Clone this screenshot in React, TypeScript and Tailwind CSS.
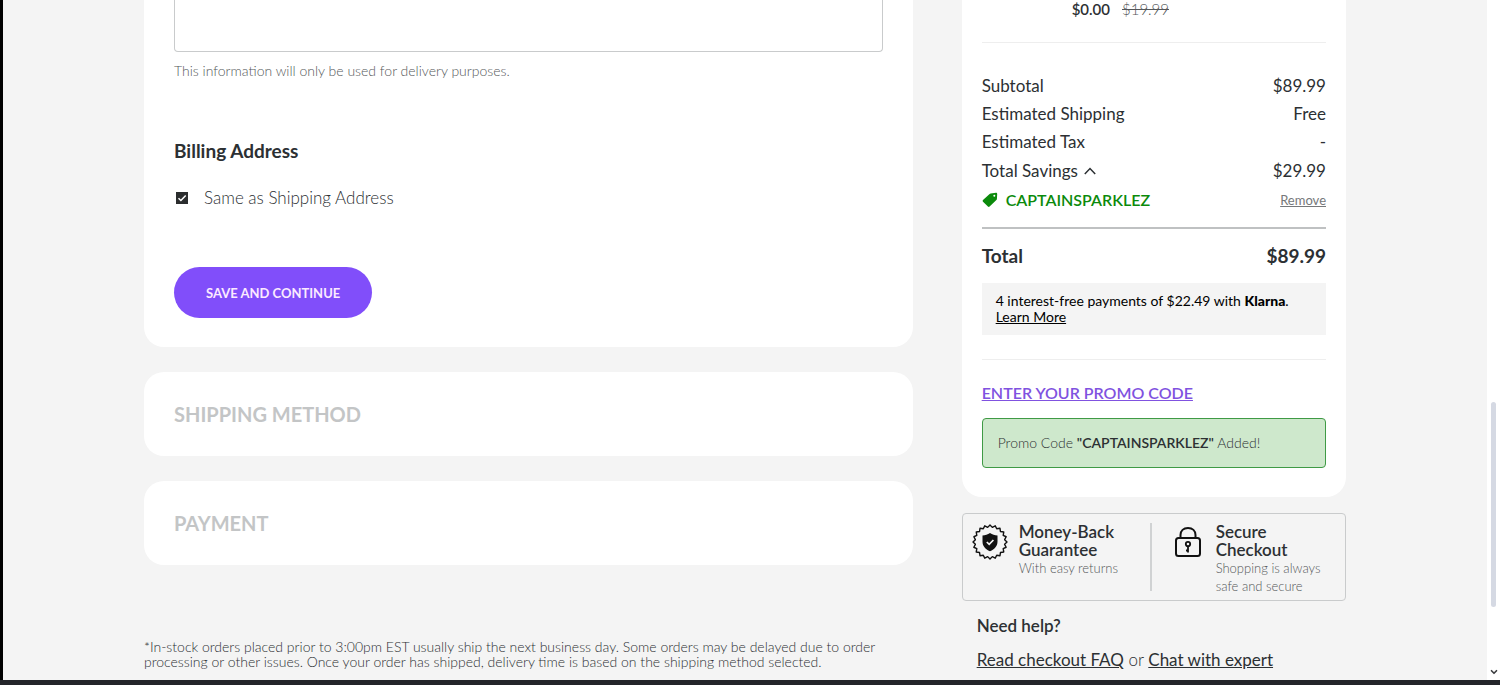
import React from 'react';
import { ChevronDown } from 'lucide-react';

const ORDER_LINES = [
  { label: 'Subtotal', value: '$89.99' },
  { label: 'Estimated Shipping', value: 'Free' },
  { label: 'Estimated Tax', value: '-' },
];

// Saw-toothed outline of the guarantee badge
const sealPoints = (teeth: number, outer: number, inner: number) => {
  const points: string[] = [];
  for (let i = 0; i < teeth * 2; i++) {
    const radius = i % 2 === 0 ? outer : inner;
    const angle = (Math.PI * i) / teeth - Math.PI / 2;
    points.push(`${(18 + radius * Math.cos(angle)).toFixed(2)},${(18 + radius * Math.sin(angle)).toFixed(2)}`);
  }
  return points.join(' ');
};

const SealIcon = () => (
  <svg viewBox="0 0 36 36" className="w-9 h-9" fill="none" aria-hidden="true">
    <polygon points={sealPoints(20, 17, 14.8)} stroke="#111" strokeWidth="1.4" strokeLinejoin="round" />
    <path d="M18 9c2.3 1.700 4.800 2.300 7.500 2.500v6c0 4.500-2.800 7.800-7.500 9.800-4.700-2-7.500-5.300-7.500-9.800v-6c2.700-.2 5.200-.8 7.500-2.500z" fill="#111" />
    <path d="M14.8 18l2.4 2.4 4.200-4.400" stroke="#f4f4f4" strokeWidth="1.7" />
  </svg>
);

const LockIcon = () => (
  <svg viewBox="0 0 28 32" className="w-7 h-8" fill="none" stroke="#111" strokeWidth="2" aria-hidden="true">
    <rect x="2" y="12" width="24" height="18" rx="2.5" />
    <path d="M6.500 12V9c0-4.300 3-7 7.500-7s7.500 2.700 7.500 7v3" />
    <circle cx="14" cy="18" r="2.2" strokeWidth="1.8" />
    <path d="M14 20v6.500M14 24.500h-2" strokeWidth="1.8" />
  </svg>
);

const TagIcon = () => (
  <svg viewBox="0 0 16 16" className="w-4 h-4 shrink-0" aria-hidden="true">
    <path d="M8.600 1.400L14 .8c.7 0 1.200.5 1.200 1.200l-.3 5c0 .4-.2.700-.5 1L7.600 14.600c-.5.5-1.200.5-1.700 0L1 9.800c-.5-.5-.5-1.200 0-1.700l6.600-6.200c.3-.3.6-.5 1-.5z" fill="#0b8a0b" />
    <circle cx="12.3" cy="3.8" r="1" fill="#fff" />
  </svg>
);

const CollapsedStep = ({ title }: { title: string }) => (
  <section className="mt-[25px] flex h-[84px] items-center rounded-[20px] bg-white px-[30px]">
    <h2 className="text-[20px] leading-7 font-bold text-[#c3c5c6]">{title}</h2>
  </section>
);

const DeliveryForm = () => (
  <div>
    <section className="rounded-b-[20px] bg-white px-[30px] pb-[29px]">
      <textarea
        aria-label="Delivery information"
        className="block h-[52px] w-full resize-none rounded-b border border-t-0 border-[#c9cbcc] bg-white outline-none"
      />
      <p className="mt-[9px] text-[14px] leading-5 font-light text-[#55585a]">
        This information will only be used for delivery purposes.
      </p>
      <h2 className="mt-14 text-[19px] leading-7 font-bold text-[#2c3033]">Billing Address</h2>
      <label className="mt-[21px] flex items-center gap-4 text-[17px] leading-6 font-light text-[#2c3033]">
        <span className="ml-0.5 grid h-3 w-3">
          <input type="checkbox" defaultChecked className="col-start-1 row-start-1 h-3 w-3 appearance-none bg-[#2b2d2e]" />
          <svg viewBox="0 0 12 12" className="pointer-events-none col-start-1 row-start-1 h-3 w-3" fill="none" aria-hidden="true">
            <path d="M2.500 6.200l2.400 2.300 4.800-5" stroke="#fff" strokeWidth="1.5" />
          </svg>
        </span>
        Same as Shipping Address
      </label>
      <button className="mt-[57px] block h-[51px] rounded-full bg-[#814efa] px-8 text-[13px] leading-5 font-bold text-[#fbeaff]">
        SAVE AND CONTINUE
      </button>
    </section>

    <CollapsedStep title="SHIPPING METHOD" />
    <CollapsedStep title="PAYMENT" />

    <p className="mt-[74px] text-[14px] leading-[15px] font-light text-[#2c3033]">
      *In-stock orders placed prior to 3:00pm EST usually ship the next business day. Some orders may be delayed due to order
      <br />
      processing or other issues. Once your order has shipped, delivery time is based on the shipping method selected.
    </p>
  </div>
);

const OrderSummary = () => (
  <section className="rounded-b-[20px] bg-white px-5 pb-[29px]">
    <div className="flex h-[42px] gap-3 pl-[90px] text-[15px] leading-[18px]">
      <span className="font-semibold text-[#2c3033]">$0.00</span>
      <s className="font-light text-[#55585a]">$19.99</s>
    </div>
    <hr className="border-[#eeeeee]" />

    <dl className="mt-[29px] text-[17px] leading-7 text-[#2c3033]">
      {ORDER_LINES.map(line => (
        <div key={line.label} className="flex justify-between">
          <dt>{line.label}</dt>
          <dd>{line.value}</dd>
        </div>
      ))}
      <div className="flex justify-between leading-[30px]">
        <dt>
          <button className="flex items-center gap-1.5">
            Total Savings
            <svg viewBox="0 0 12 8" className="h-2 w-3" fill="none" stroke="#2c3033" strokeWidth="1.5" aria-hidden="true">
              <path d="M.8 7L6 1.500 11.200 7" />
            </svg>
          </button>
        </dt>
        <dd>$29.99</dd>
      </div>
      <div className="flex items-center justify-between">
        <dt className="flex items-center gap-2 text-[16px] leading-7 font-semibold text-[#0b8a0b]">
          <TagIcon />
          CAPTAINSPARKLEZ
        </dt>
        <dd className="flex">
          <button className="text-[13px] leading-5 text-[#76787a] underline">Remove</button>
        </dd>
      </div>
    </dl>

    <div className="mt-[13px] flex justify-between border-t-2 border-[#bfc1c2] pt-[13px] text-[19px] leading-7 font-bold text-[#2c3033]">
      <span>Total</span>
      <span>$89.99</span>
    </div>

    <div className="mt-[13px] h-[52px] bg-[#f4f4f4] px-[14px] pt-[10px] text-[14px] leading-4 text-black">
      4 interest-free payments of $22.49 with <b className="font-black">Klarna</b>.
      <br />
      <a href="#klarna" className="underline">Learn More</a>
    </div>

    <hr className="mt-6 border-[#eeeeee]" />

    <button className="mt-[21px] block text-[16px] leading-6 font-semibold text-[#8052e0] underline">
      ENTER YOUR PROMO CODE
    </button>
    <p className="mt-[13px] flex h-[50px] items-center rounded border border-[#3f9a45] bg-[#cee8cc] px-[15px] text-[14px] leading-5 font-light text-[#2c3033]">
      <span>Promo Code <b className="font-semibold">"CAPTAINSPARKLEZ"</b> Added!</span>
    </p>
  </section>
);

const TrustBadges = () => (
  <section className="mt-4 flex h-[88px] rounded border border-[#c9cbcc] py-[9px] pl-[9px]">
    <div className="flex w-[180px] shrink-0 gap-[11px] border-r-2 border-[#d0d2d3]">
      <span className="flex h-[38px] shrink-0 items-center"><SealIcon /></span>
      <div>
        <h3 className="text-[17px] leading-[18px] font-semibold text-[#2c3033]">Money-Back<br />Guarantee</h3>
        <p className="text-[13px] leading-[18px] font-light text-[#55585a]">With easy returns</p>
      </div>
    </div>
    <div className="flex flex-1 gap-[14px] pl-[22px]">
      <span className="flex h-[38px] shrink-0 items-center"><LockIcon /></span>
      <div>
        <h3 className="text-[17px] leading-[18px] font-semibold text-[#2c3033]">Secure<br />Checkout</h3>
        <p className="text-[13px] leading-[18px] font-light text-[#55585a]">Shopping is always<br />safe and secure</p>
      </div>
    </div>
  </section>
);

const HelpLinks = () => (
  <section className="mt-[13px] px-[15px] text-[17px] leading-6 text-[#2c3033]">
    <h3 className="font-semibold">Need help?</h3>
    <p className="mt-[10px] pb-2 font-light">
      <a href="#faq" className="font-normal underline">Read checkout FAQ</a> or{' '}
      <a href="#chat" className="font-normal underline">Chat with expert</a>
    </p>
  </section>
);

const ScrollTrack = () => (
  <div className="flex w-[13px] shrink-0 flex-col items-center bg-white" aria-hidden="true">
    <div className="flex-[402]" />
    <div className="w-[5px] flex-[205] rounded-full bg-[#d5d9e3]" />
    <div className="flex-[59]" />
    <ChevronDown className="mb-0.5 h-3 w-2.5 text-[#3c3e40]" strokeWidth={4} />
  </div>
);

export default function App() {
  return (
    <div className="flex min-h-screen flex-col bg-[#f4f4f4] font-['Lato',sans-serif]">
      <div className="flex flex-1 border-l-3 border-black">
        <main className="flex-1 px-6">
          <div className="mx-auto grid max-w-[1202px] grid-cols-[2fr_1fr] gap-[49px]">
            <DeliveryForm />
            <aside>
              <OrderSummary />
              <TrustBadges />
              <HelpLinks />
            </aside>
          </div>
        </main>
        <ScrollTrack />
      </div>
      <footer className="h-[5px] bg-[#23252a]" />
    </div>
  );
}
